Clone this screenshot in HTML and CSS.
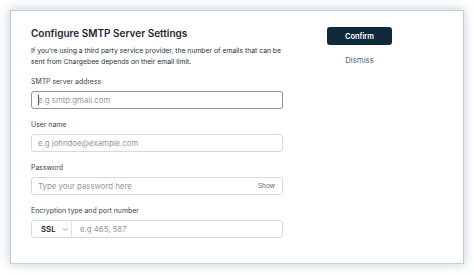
FILE: index.html
```html
<!DOCTYPE html>
<html>
<head>
<meta charset="utf-8">
<link rel="stylesheet" href="styles.css">
</head>
<body>
<div class="card">
  <div class="main">
    <h1 class="title">Configure SMTP Server Settings</h1>
    <p class="desc">If you're using a third party service provider, the number of emails that can be sent from Chargebee depends on their email limit.</p>

    <div class="field">
      <label class="label">SMTP server address</label>
      <div class="input focused"><span class="caret"></span><span class="ph">e.g smtp.gmail.com</span></div>
    </div>

    <div class="field">
      <label class="label">User name</label>
      <div class="input"><span class="ph">e.g johndoe@example.com</span></div>
    </div>

    <div class="field">
      <label class="label">Password</label>
      <div class="input"><span class="ph">Type your password here</span><span class="show">Show</span></div>
    </div>

    <div class="field">
      <label class="label">Encryption type and port number</label>
      <div class="input split">
        <div class="select"><span class="sel-val">SSL</span>
          <svg class="chev" width="7" height="5" viewBox="0 0 7 5"><path d="M1 1.2 L3.5 3.6 L6 1.2" fill="none" stroke="#8a949b" stroke-width="0.9"/></svg>
        </div>
        <span class="ph port">e.g 465, 587</span>
      </div>
    </div>
  </div>
  <div class="side">
    <button class="btn">Confirm</button>
    <a class="dismiss">Dismiss</a>
  </div>
</div>
</body>
</html>
```

FILE: styles.css
```css
html, body {
  margin: 0;
  padding: 0;
  background: #ffffff;
}
body {
  padding: 10px;
  font-family: Inter, "Noto Sans", sans-serif;
}
.card {
  box-sizing: border-box;
  width: 454px;
  height: 254px;
  border: 1px solid #c3ccd3;
  background: #fff;
  box-shadow: 0 0 9px 1px rgba(110, 140, 160, 0.35);
  padding: 16px 0 0 20px;
  display: flex;
  align-items: flex-start;
}
.main {
  width: 252px;
}
.title {
  margin: 0;
  font-size: 10px;
  line-height: 12px;
  font-weight: 600;
  color: #1d2830;
  letter-spacing: 0;
}
.desc {
  margin: 6px -5px 0 0;
  font-size: 6.8px;
  line-height: 11px;
  color: #27323b;
}
.field {
  margin-top: 8.5px;
  display: flex;
  flex-direction: column;
}
.field + .field {
  margin-top: 9.5px;
}
.label {
  font-size: 6.9px;
  line-height: 11px;
  color: #3a454e;
}
.input {
  margin-top: 4.5px;
  box-sizing: border-box;
  height: 18px;
  border: 1px solid #d6dbdf;
  border-radius: 3px;
  display: flex;
  align-items: center;
  padding: 0 6px;
  background: #fff;
}
.input.focused {
  border-color: #8c969d;
}
.caret {
  width: 1px;
  height: 10px;
  background: #4a545b;
  margin-right: -1px;
}
.ph {
  font-size: 7.8px;
  color: #8f989e;
  flex: 1;
}
.show {
  font-size: 6.5px;
  color: #5d6971;
  margin-right: 1px;
}
.input.split {
  padding: 0;
}
.select {
  width: 40px;
  height: 100%;
  border-right: 1px solid #dde1e4;
  display: flex;
  align-items: center;
  padding-left: 9px;
  box-sizing: border-box;
}
.sel-val {
  font-size: 7.8px;
  font-weight: 600;
  color: #1d2830;
  width: 20px;
}
.chev {
  margin-left: 1px;
}
.port {
  padding-left: 8px;
}
.side {
  margin-left: 44px;
  display: flex;
  flex-direction: column;
  align-items: center;
  width: 65px;
}
.btn {
  width: 65px;
  height: 18px;
  border: none;
  border-radius: 3px;
  background: #0f2939;
  color: #fff;
  font-family: Inter, "Noto Sans", sans-serif;
  font-size: 7.4px;
  font-weight: 600;
  padding: 0;
}
.dismiss {
  margin-top: 9.5px;
  font-size: 7.8px;
  line-height: 11px;
  color: #4d6878;
}
```
